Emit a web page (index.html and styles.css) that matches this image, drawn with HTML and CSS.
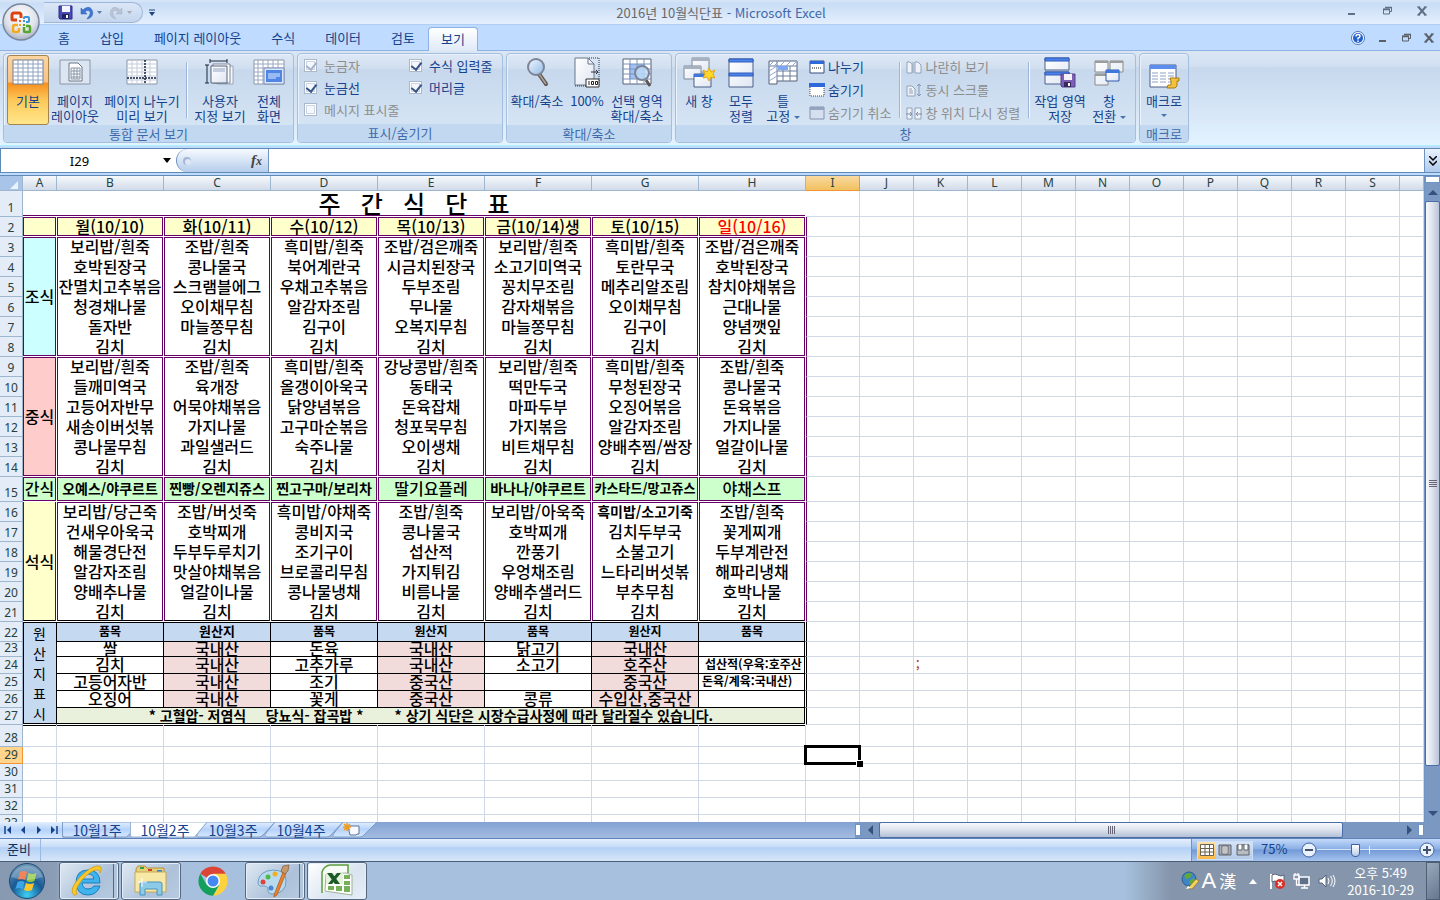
FILE: index.html
```html
<!DOCTYPE html>
<html lang="ko">
<head>
<meta charset="utf-8">
<title>2016년 10월식단표 - Microsoft Excel</title>
<link rel="stylesheet" href="styles.css">
</head>
<body>
<svg class="defs" aria-hidden="true">
  <defs>
    <linearGradient id="paper" x1="0" y1="0" x2="1" y2="1"><stop offset="0" stop-color="#fff"/><stop offset="1" stop-color="#dfe6f2"/></linearGradient>
    <radialGradient id="orb" cx=".5" cy=".35" r=".7"><stop offset="0" stop-color="#fff"/><stop offset=".6" stop-color="#dfe3ea"/><stop offset="1" stop-color="#9aa5b8"/></radialGradient>
    <radialGradient id="start" cx=".5" cy=".9" r=".9"><stop offset="0" stop-color="#3fd0f5"/><stop offset=".5" stop-color="#175a95"/><stop offset="1" stop-color="#6f97b8"/></radialGradient>
    <linearGradient id="tabfill" x1="0" y1="0" x2="0" y2="1"><stop offset="0" stop-color="#e3effd"/><stop offset=".5" stop-color="#b5d2fa"/><stop offset="1" stop-color="#d8e9ff"/></linearGradient>
    <linearGradient id="glass" x1="0" y1="0" x2="1" y2="1"><stop offset="0" stop-color="#f2f8ff"/><stop offset="1" stop-color="#8fb9e8"/></linearGradient>
  </defs>
</svg>

<header class="titlebar">
  <div class="quick">
    <button aria-label="저장"><svg width="16" height="16"><path d="M1 1h13v13H2l-1-1z" fill="#4a4bb5" stroke="#2c2c86"/><path d="M4 1h8v6H4z" fill="#f4f6fd"/><path d="M4 9h7v5H4z" fill="#222263"/><path d="M8 10h2v3H8z" fill="#fff"/></svg></button>
    <button aria-label="실행 취소"><svg width="22" height="16"><path d="M1 3v6h6L5 7c3-3 6-1 5 2-.5 2-2 3-3 5 5-1 7-5 5-9-2-4-6-3-9 0z" fill="#3f78d4" stroke="#2c5bb0" stroke-width=".5"/><path d="M17 6h5l-2.500 3z" fill="#5b7fb5"/></svg></button>
    <button aria-label="다시 실행"><svg width="26" height="16"><path d="M14 3v6H8l2-2C7 4 4 6 5 9c.5 2 2 3 3 5-5-1-7-5-5-9 2-4 6-3 9 0z" fill="#b9c4d6" stroke="#a3b0c6" stroke-width=".5"/><path d="M19 6h5l-2.500 3z" fill="#a9a9b0"/></svg></button>
  </div>
  <button class="quick-more" aria-label="빠른 실행 도구 모음 사용자 지정"><svg width="8" height="8"><path d="M1 1h6" stroke="#1f4380"/><path d="M1 3h6L4 7z" fill="#1f4380"/></svg></button>
  <h1 class="caption"><span>2016년 10월식단표</span> - Microsoft Excel</h1>
  <div class="winbtns">
    <button aria-label="최소화"><svg width="10" height="10"><path d="M1 8h7" stroke="#5f6f86" stroke-width="2"/></svg></button>
    <button aria-label="이전 크기로"><svg width="10" height="10"><path d="M3.500 2V1.500h6v4H8M1 3h6.500v5h-6V3" fill="none" stroke="#5f6f86"/><path d="M1 3.500h7M3 1.500h7" stroke="#5f6f86" stroke-width="1.500"/></svg></button>
    <button aria-label="닫기"><svg width="10" height="10"><path d="M1.500 1l7 8M8.500 1l-7 8" stroke="#5f6f86" stroke-width="2"/><path d="M0 1h3M7 1h3M0 9h3M7 9h3" stroke="#5f6f86"/></svg></button>
  </div>
</header>
<button class="office" aria-label="Office 단추"><svg width="40" height="40" viewBox="0 0 40 40">
  <circle cx="20" cy="20" r="18" fill="url(#orb)" stroke="#77869e" stroke-width="1.500"/>
  <g fill="none" stroke-linejoin="round"><path d="M16 18h-4q-1 0-1-1v-4q0-2 2-2h5q2 0 2 2v3" stroke="#dc4512" stroke-width="3"/><path d="M23 17v-1q0-1 1-1h3q1 0 1 1v3q0 1-1 1h-2" stroke="#3b95d8" stroke-width="2"/><path d="M17 23h-3q-2 0-2 2v3q0 2 2 2h2q2 0 2-2v-2" stroke="#f6a91b" stroke-width="2.500"/><path d="M23 25v4q0 1 1 1h4q1 0 1-1v-4q0-1-1-1h-3" stroke="#58a52c" stroke-width="2.500"/></g>
  <path d="M18 18h2v2h-2z" fill="#e8641b"/><path d="M22 18h2v2h-2z" fill="#3b95d8"/><path d="M18 22h2v2h-2z" fill="#f6a91b"/><path d="M22 22h2v2h-2z" fill="#58a52c"/>
</svg></button>

<nav class="tabs">
  <button>홈</button><button>삽입</button><button>페이지 레이아웃</button><button>수식</button><button>데이터</button><button>검토</button><button class="on">보기</button>
  <div class="docbtns">
    <button aria-label="도움말"><svg width="14" height="14"><circle cx="7" cy="7" r="6.500" fill="#fff" stroke="#4a74b8"/><circle cx="7" cy="7" r="5" fill="#2260cc"/><path d="M5 5.500q0-2 2-2t2 1.700Q9 6.500 7 7.300V8.500M7 9.500v1.500" stroke="#fff" stroke-width="1.500" fill="none"/></svg></button>
    <button aria-label="창 최소화"><svg width="10" height="10"><path d="M1 8h7" stroke="#5a5f68" stroke-width="2"/></svg></button>
    <button aria-label="창 복원"><svg width="10" height="10"><path d="M3.500 2V1.500h6v4H8M1 3h6.500v5h-6V3" fill="none" stroke="#5a5f68"/><path d="M1 3.500h7M3 1.500h7" stroke="#5a5f68" stroke-width="1.500"/></svg></button>
    <button aria-label="창 닫기"><svg width="10" height="10"><path d="M1.500 1l7 8M8.500 1l-7 8" stroke="#5a5f68" stroke-width="2"/><path d="M0 1h3M7 1h3M0 9h3M7 9h3" stroke="#5a5f68"/></svg></button>
  </div>
</nav>

<section class="ribbon">
  <fieldset class="group views">
    <div class="items">
      <button class="big on"><svg width="32" height="30"><path d="M1 3h30v24H1z" fill="#fff" stroke="#6f7f97"/><path d="M1 7h30M1 11h30M1 15h30M1 19h30M1 23h30M6 3v24M11 3v24M16 3v24M21 3v24M26 3v24" stroke="#8fa2bf"/></svg>기본</button>
      <button class="big w52"><svg width="32" height="30"><path d="M1 3h30v24H1z" fill="#dce6f3" stroke="#8b95a6"/><path d="M10 6h9l4 4v14H10z" fill="#fff" stroke="#6b7687"/><path d="M12 11h9v11h-9zM12 14h9M12 17h9M12 20h9M15 11v11M18 11v11" fill="none" stroke="#8794a8"/></svg>페이지<br>레이아웃</button>
      <button class="big w82"><svg width="32" height="30"><path d="M1 3h30v24H1z" fill="#fff" stroke="#8b95a6"/><path d="M1 7h30M1 11h30M1 15h30M1 19h30M1 23h30M6 3v24M11 3v24M16 3v24M24 3v24" stroke="#c3cddd"/><path d="M19 3v24M1 21h30" stroke="#111e3c" stroke-width="1.500" stroke-dasharray="2 1"/></svg>페이지 나누기<br>미리 보기</button>
      <span class="sep"></span>
      <button class="big w58"><svg width="32" height="30"><path d="M13 9h16v18H13z" fill="#f5f7fb" stroke="#9aa5b8"/><path d="M9 7h17v19H9z" fill="#fff" stroke="#7a879c"/><path d="M7 9h16v17H7z" fill="url(#paper)" stroke="#566278"/><path d="M9 11h12v4H9z" fill="#c3cddf"/><path d="M6 4h17M6 2v4M23 2v4M3 8v18M1 8h4M1 26h4" stroke="#1b2638"/></svg>사용자<br>지정 보기</button>
      <button class="big w40"><svg width="32" height="30"><path d="M1 3h30v24H1z" fill="#fff" stroke="#8b95a6"/><path d="M1 7h30M1 11h30M1 15h30M1 19h30M1 23h30M5 3v24M10 3v24M15 3v24M20 3v24M25 3v24" stroke="#9aa9c0"/><path d="M11 11h20v16H11z" fill="#dbe7fb" stroke="#7d90b8"/><path d="M13 13h16v12H13z" fill="#4f86e6"/><path d="M15 17h12M15 19h12M15 21h8" stroke="#e3eeff"/></svg>전체<br>화면</button>
    </div>
    <legend>통합 문서 보기</legend>
  </fieldset>
  <fieldset class="group show">
    <div class="items checks">
      <label class="off"><input type="checkbox" checked disabled>눈금자</label>
      <label><input type="checkbox" checked>수식 입력줄</label>
      <label><input type="checkbox" checked>눈금선</label>
      <label><input type="checkbox" checked>머리글</label>
      <label class="off"><input type="checkbox" disabled>메시지 표시줄</label>
    </div>
    <legend>표시/숨기기</legend>
  </fieldset>
  <fieldset class="group zoom">
    <div class="items">
      <button class="big w54"><svg width="32" height="30"><path d="M18 17l7 10" stroke="#5f5450" stroke-width="4" stroke-linecap="round"/><path d="M18 17l7 10" stroke="#b0a49c" stroke-width="1.500"/><circle cx="15" cy="10" r="8" fill="url(#glass)" stroke="#7d8594" stroke-width="2"/></svg>확대/축소</button>
      <button class="big w46"><svg width="32" height="30"><path d="M4 1h13l6 6v21H4z" fill="url(#paper)" stroke="#6b7687"/><path d="M17 1v6h6" fill="none" stroke="#6b7687"/><path d="M18 1h10v27M4 29h12" fill="none" stroke="#27344f" stroke-dasharray="1 1"/><path d="M20 15h7M25 13l2 2-2 2" fill="none" stroke="#333"/><path d="M15 22h13v8H15z" fill="#fff" stroke="#333"/><path d="M18 24v4M20.500 24.500h2v3h-2zM24.500 24.500h2v3h-2z" fill="none" stroke="#222"/></svg>100%</button>
      <button class="big w54"><svg width="32" height="30"><path d="M2 2h28v25H2z" fill="#fff" stroke="#566278"/><path d="M8 7h16v15H8z" fill="#9fc0f5"/><path d="M2 7h28M2 12h28M2 17h28M2 22h28M9 2v25M16 2v25M23 2v25" stroke="#7992bd"/><path d="M25 23l4 6" stroke="#5f5450" stroke-width="3"/><circle cx="21" cy="16" r="7" fill="#bcd9f7" fill-opacity=".85" stroke="#7d8594" stroke-width="2"/></svg>선택 영역<br>확대/축소</button>
    </div>
    <legend>확대/축소</legend>
  </fieldset>
  <fieldset class="group window">
    <div class="items">
      <button class="big w40"><svg width="32" height="32"><path d="M9 1h17v14H9z" fill="url(#paper)" stroke="#7a869a"/><path d="M9 1h17v3H9z" fill="#a8b1c0"/><path d="M1 9h17v13H1z" fill="url(#paper)" stroke="#7a869a"/><path d="M1 9h17v3H1z" fill="#a8b1c0"/><path d="M11 17h17v13H11z" fill="url(#paper)" stroke="#4a5f88"/><path d="M11 17h17v3H11z" fill="#3f77dd"/><path d="M26 11l2 4 4-2-2 4 2 4-4-1-2 4-2-4-4 1 2-4-2-4 4 2z" fill="#ffd829" stroke="#e3a513"/></svg>새 창</button>
      <button class="big w44"><svg width="32" height="32"><path d="M4 2h24v28H4z" fill="url(#paper)" stroke="#4a5f88"/><path d="M4 2h24v3H4zM4 16h24v3H4z" fill="#4c83ea" stroke="#2c5bb8"/></svg>모두<br>정렬</button>
      <button class="big w40"><svg width="32" height="30"><path d="M2 4h28v20H10v3H2z" fill="#fff" stroke="#566278"/><path d="M2 9h28M10 4v20M10 14h20M10 19h20M16 9v15M23 9v15" stroke="#6b7c9b"/><path d="M2 9l5-5M7 9l5-5M13 9l5-5M19 9l5-5M25 9l5-5M2 14l8-5M2 19l8-5M2 24l8-5" stroke="#8fa8d8"/><path d="M11 9h10v4H11z" fill="#7ea6f2"/></svg>틀<br><span>고정 <i class="dd"></i></span></button>
      <div class="smalls first">
        <button><svg width="16" height="14"><path d="M1 1h14v12H1z" fill="#fff" stroke="#33507f"/><path d="M1 1h14v3H1z" fill="#2f68d8"/><path d="M3 8h10" stroke="#111" stroke-dasharray="1 1"/></svg>나누기</button>
        <button><svg width="16" height="14"><path d="M1 1h14v12H1z" fill="#fff" stroke="#444" stroke-dasharray="1 1"/><path d="M0 0h16v4H0z" fill="#2f68d8"/></svg>숨기기</button>
        <button disabled><svg width="16" height="14"><path d="M1 1h14v12H1z" fill="#d5dfef" stroke="#8392ad"/><path d="M1 1h14v3H1z" fill="#93a3c0"/></svg>숨기기 취소</button>
      </div>
      <span class="sep"></span>
      <div class="smalls">
        <button disabled><svg width="16" height="14"><path d="M1 2h3l2 2v9H1zM9 2h3l3 3v8H9z" fill="#eef3fa" stroke="#93a1b8"/><path d="M7 2v11" stroke="#93a1b8"/></svg>나란히 보기</button>
        <button disabled><svg width="16" height="14"><path d="M1 3h5l3 3v7H1z" fill="#eef3fa" stroke="#93a1b8"/><path d="M3 6h3M3 8h4M3 10h4" stroke="#93a1b8"/><path d="M13 1v12M11 3l2-2 2 2M11 11l2 2 2-2" fill="none" stroke="#8796b0"/></svg>동시 스크롤</button>
        <button disabled><svg width="16" height="14"><path d="M1 2h5v11H1zM9 2h6v11H9z" fill="#eef3fa" stroke="#93a1b8"/><path d="M0 8h6M4 6l2 2-2 2M16 8h-6M12 6l-2 2 2 2" fill="none" stroke="#7f8ea8"/></svg>창 위치 다시 정렬</button>
      </div>
      <span class="sep"></span>
      <button class="big w54"><svg width="32" height="32"><path d="M1 1h24v12H1zM1 15h24v12H1z" fill="url(#paper)" stroke="#4a5f88"/><path d="M1 1h24v3H1zM1 15h24v3H1z" fill="#4c83ea" stroke="#2c5bb8"/><path d="M17 17h14v13H18l-1-1z" fill="#7d5fb8" stroke="#55408a"/><path d="M20 17h8v6h-8z" fill="#f4f1fb"/><path d="M20 25h7v5h-7z" fill="#38285f"/><path d="M24 26h2v3h-2z" fill="#fff"/></svg>작업 영역<br>저장</button>
      <button class="big w44"><svg width="32" height="32"><path d="M2 4h13v11H2zM17 4h13v11H17zM2 17h13v11H2z" fill="url(#paper)" stroke="#8a8a8a"/><path d="M2 4h13v2H2zM17 4h13v2H17zM2 17h13v2H2z" fill="#9c9c9c"/><path d="M13 13h13v11H13z" fill="url(#paper)" stroke="#2f5aa8"/><path d="M13 13h13v3H13z" fill="#3f77dd"/></svg>창<br><span>전환 <i class="dd"></i></span></button>
    </div>
    <legend>창</legend>
  </fieldset>
  <fieldset class="group macro">
    <div class="items">
      <button class="big w46"><svg width="32" height="32"><path d="M2 8h26v22H2z" fill="#fff" stroke="#4a5f88"/><path d="M2 8h26v4H2z" fill="#5b8dee"/><path d="M4 16h22M4 19h22M4 22h22M4 25h22" stroke="#8fa3c8" stroke-dasharray="6 2"/><path d="M22 21h9v3h-2v5l-2 2h-8l1-3h3v-4z" fill="#f3c23c" stroke="#a87b16"/></svg>매크로<i class="dd below"></i></button>
    </div>
    <legend>매크로</legend>
  </fieldset>
</section>

<section class="formula">
  <input class="name" aria-label="이름 상자" value="I29">
  <button class="namedd" aria-label="이름 목록"><svg width="8" height="5"><path d="M0 0h8L4 5z" fill="#000"/></svg></button>
  <button class="fx" aria-label="함수 삽입"><svg width="10" height="10"><circle cx="5" cy="5" r="4" fill="#a5b6d2"/><circle cx="6" cy="6" r="3" fill="#dde7f5"/></svg><span>f<small>x</small></span></button>
  <input class="entry" aria-label="수식 입력줄">
  <button class="expand" aria-label="수식 입력줄 확장"><svg width="8" height="10"><path d="M0 0l4 4 4-4M0 5l4 4 4-4" fill="none" stroke="#000" stroke-width="1.500"/></svg></button>
</section>

<main class="book">
  <div class="sheet"><table id="grid"></table></div>
  <div class="vscroll">
    <span class="split"></span>
    <button aria-label="위로"><svg width="10" height="5"><path d="M0 5h10L5 0z" fill="#33507f"/></svg></button>
    <div class="thumb"><i></i></div>
    <div class="rest"></div>
    <button aria-label="아래로"><svg width="10" height="5"><path d="M0 0h10L5 5z" fill="#33507f"/></svg></button>
  </div>
</main>

<section class="bottom">
  <div class="tabnav">
    <button aria-label="첫 시트"><svg width="8" height="8"><path d="M1 0v8" stroke="#15428b" stroke-width="1.500"/><path d="M7 0v8L3 4z" fill="#15428b"/></svg></button>
    <button aria-label="이전 시트"><svg width="8" height="8"><path d="M6 0v8L2 4z" fill="#15428b"/></svg></button>
    <button aria-label="다음 시트"><svg width="8" height="8"><path d="M2 0v8l4-4z" fill="#15428b"/></svg></button>
    <button aria-label="마지막 시트"><svg width="8" height="8"><path d="M7 0v8" stroke="#15428b" stroke-width="1.500"/><path d="M1 0v8l4-4z" fill="#15428b"/></svg></button>
  </div>
  <div class="sheettabs">
    <button><svg width="80" height="16"><path d="M.5 0v13q0 2 2 2h62l4-4V0z" fill="url(#tabfill)" stroke="#7d9cc9"/></svg>10월1주</button>
    <button class="on"><svg width="80" height="16"><path d="M.5 0v13q0 2 2 2h62L77 0z" fill="#fff" stroke="#9ab4d8"/></svg>10월2주</button>
    <button><svg width="80" height="16"><path d="M9 0h68L65 13q-2 2-4 2H0q-2 0 0-4z" fill="url(#tabfill)" stroke="#7d9cc9"/></svg>10월3주</button>
    <button><svg width="80" height="16"><path d="M9 0h68L65 13q-2 2-4 2H0q-2 0 0-4z" fill="url(#tabfill)" stroke="#7d9cc9"/></svg>10월4주</button>
    <button class="new" aria-label="워크시트 삽입"><svg width="44" height="16"><path d="M9 0h34L30 13q-2 2-4 2H0q-2 0 0-4z" fill="url(#tabfill)" stroke="#7d9cc9"/><path d="M14 4h11v8h-2l-1 1h-6z" fill="#f6f9fd" stroke="#5f7596"/><path d="M13 1v8M9 5h8M10 2l6 6M16 2l-6 6" stroke="#f09a20" stroke-width="1.500"/></svg></button>
  </div>
  <div class="hscroll">
    <span class="split"></span>
    <button aria-label="왼쪽으로"><svg width="5" height="10"><path d="M5 0v10L0 5z" fill="#33507f"/></svg></button>
    <div class="thumb"><i></i></div>
    <div class="rest"></div>
    <button aria-label="오른쪽으로"><svg width="5" height="10"><path d="M0 0v10l5-5z" fill="#33507f"/></svg></button>
    <span class="split"></span>
  </div>
</section>

<footer class="status">
  <span class="ready">준비</span>
  <div class="statusright">
    <div class="viewbtns">
      <button class="on" aria-label="기본"><svg width="14" height="12"><path d="M.5.5h13v11H.5z" fill="#fff" stroke="#6c6250"/><path d="M0 4.500h14M0 8h14M5 0v12M9.500 0v12" stroke="#6c6250"/></svg></button>
      <button aria-label="페이지 레이아웃"><svg width="14" height="12"><path d="M1 1h12v10H1z" fill="#a9adb5" stroke="#5d626c"/><path d="M4 2h6v8H4z" fill="#fff" stroke="#5d626c"/><path d="M5 4h4M5 6h4M5 8h4" stroke="#888"/></svg></button>
      <button aria-label="페이지 나누기 미리 보기"><svg width="14" height="12"><path d="M1 1h12v10H1z" fill="#b9bcc3" stroke="#5d626c"/><path d="M2 0h4v6H2zM8 0h4v6H8z" fill="#fff" stroke="#5d626c"/></svg></button>
    </div>
    <span class="pct">75%</span>
    <button class="round" aria-label="축소"><svg width="16" height="16"><circle cx="8" cy="8" r="7" fill="#e9f1fc" stroke="#3f62a0"/><path d="M4 8h8" stroke="#44546f" stroke-width="2"/></svg></button>
    <input type="range" min="0" max="100" value="37" aria-label="확대/축소">
    <button class="round" aria-label="확대"><svg width="16" height="16"><circle cx="8" cy="8" r="7" fill="#e9f1fc" stroke="#3f62a0"/><path d="M4 8h8M8 4v8" stroke="#44546f" stroke-width="2"/></svg></button>
  </div>
</footer>

<footer class="taskbar">
  <button class="startbtn" aria-label="시작"><svg width="38" height="38" viewBox="0 0 38 38"><circle cx="19" cy="19" r="17.500" fill="url(#start)" stroke="#1f4a75"/><path d="M12 10q4-2 7 0l-2 8q-3-2-7 0z" fill="#ee5b22"/><path d="M20.500 11q4 2 8 0l-2 8q-4 2-8 0z" fill="#8fc63c"/><path d="M9.500 20q4-2 7 0l-2 7q-3-2-7 0z" fill="#3fa4e8"/><path d="M18 21q4 2 8 0l-2 7q-4 2-8 0z" fill="#fcc52d"/><path d="M3 15a17 17 0 0 1 32 0q-16 6-32 0z" fill="#fff" fill-opacity=".25"/></svg></button>
  <button class="task framed stack" aria-label="Internet Explorer"><svg width="34" height="34" viewBox="0 0 34 34"><path d="M30 19H12q1 6 6 6 4 0 6-3h6q-3 9-12 9-11 0-12-12Q6 6 18 6q12 0 12 13zM12 15h12q-1-5-6-5t-6 5z" fill="#3fb4ec" stroke="#1c7dc0"/><path d="M4 31Q-2 26 10 13 22 1 29 2q4 1 1 7 0-4-4-3-6 1-14 10Q4 26 7 30q-2 2-3 1z" fill="#f8c928" stroke="#c9960f" stroke-width=".7"/></svg></button>
  <button class="task framed" aria-label="파일 탐색기"><svg width="36" height="34" viewBox="0 0 36 34"><path d="M3 5l2-3h7l2 2h17v5H3z" fill="#e8cf7a" stroke="#b4923a"/><path d="M7 3h4v2H7z" fill="#2ca046"/><path d="M15 5h4v2h-4z" fill="#d04026"/><path d="M24 6h5v2h-5z" fill="#2b8ae0"/><path d="M2 8h31v20H2z" fill="#f8e8a5" stroke="#c7a854"/><path d="M7 31V20q0-2 2-2h18q2 0 2 2v11h-5v-6H12v6z" fill="#8ccbe8" stroke="#4a92bb"/><path d="M9 14v9M5 18h9" stroke="#fff"/></svg></button>
  <button class="task" aria-label="Chrome"><svg width="32" height="32" viewBox="0 0 32 32"><path d="M16 16L3.300 8.700A14.700 14.700 0 0 1 28.700 8.700z" fill="#db4437"/><path d="M16 8.700h12.700A14.700 14.700 0 0 1 16 30.700l6.300-11z" fill="#fdd23e"/><path d="M3.300 8.700A14.700 14.700 0 0 0 16 30.700l6.300-11H9.700z" fill="#12a05c"/><circle cx="16" cy="16" r="7" fill="#fff"/><circle cx="16" cy="16" r="5.500" fill="#4688f1"/></svg></button>
  <button class="task framed stack" aria-label="그림판"><svg width="34" height="34" viewBox="0 0 34 34"><path d="M17 6q13 0 13 11 0 12-13 13-6 0-5-5 0-3-5-3-5 1-5-4Q3 7 17 6z" fill="#b8daf0" stroke="#6a9dc2"/><circle cx="7" cy="18" r="2.500" fill="#e0413a"/><circle cx="12" cy="13" r="2.500" fill="#51b748"/><circle cx="19" cy="10" r="2.500" fill="#f2b01f"/><circle cx="15" cy="24" r="2.500" fill="#4b86d6"/><path d="M18 31l9-23 3 1-9 22-3 2z" fill="#e8822c" stroke="#a9561a" stroke-width=".7"/><path d="M25 7l2-5 6-1-1 6-3 3z" fill="#c79a6c" stroke="#83583a" stroke-width=".7"/></svg></button>
  <button class="task framed current" aria-label="Excel"><svg width="34" height="34" viewBox="0 0 34 34"><path d="M2 29V8q2-6 8-7h18v8" fill="#f7fbf5" stroke="#5c9e3f" stroke-width="1.500"/><path d="M5 27l1-17 20-1 6 2v20z" fill="#fff" stroke="#9db396"/><path d="M8 22h6v4H8zM16 22h6v5h-6zM24 22h6v6h-6zM24 11h6v4h-6zM24 17h6v4h-6z" fill="#76b15a"/><path d="M6 9h17v11H6z" fill="#e5f3dc"/><path d="M7 9h5l8 11h-5zM17 9h4L12 20H8z" fill="#1c5a27"/></svg></button>
  <div class="tray">
    <svg width="20" height="20"><circle cx="8" cy="8" r="7" fill="#3c86c8" stroke="#2b5d90"/><path d="M3 5q4-5 8-2l-2 4-4 1zM8 10l5-3 1 3-4 4z" fill="#61a83c"/><path d="M7 17l8-9 3 2-7 8z" fill="#f7d35c" stroke="#8f6a20" stroke-width=".7"/><path d="M5 18l2-3 3 2z" fill="#fff"/></svg>
    <span class="ime">A</span><span class="han">漢</span>
    <button aria-label="숨겨진 아이콘 표시"><svg width="8" height="5"><path d="M0 5h8L4 0z" fill="#fff"/></svg></button>
    <svg width="18" height="18"><path d="M3 2v15" stroke="#fff" stroke-width="2"/><path d="M4 3q3-2 6 0t6 0v7q-3 2-6 0t-6 0z" fill="#fff" stroke="#56657a"/><circle cx="12" cy="12" r="5" fill="#d92f25"/><path d="M10 10l4 4M14 10l-4 4" stroke="#fff" stroke-width="1.500"/></svg>
    <svg width="18" height="18"><path d="M6 5h10v8H6z" fill="#5f7188" stroke="#fff" stroke-width="1.500"/><path d="M8 16h7M11.500 13v3" stroke="#fff" stroke-width="1.500"/><path d="M1 3h5v4H1zM2 1v2M5 1v2M3.500 7v6h3" fill="none" stroke="#fff" stroke-width="1.300"/></svg>
    <svg width="18" height="18"><path d="M1 7h3l4-4v12l-4-4H1z" fill="#fff" stroke="#56657a"/><path d="M10 6q2 3 0 6M12.500 4q3.500 5 0 10M15 3q4 6 0 12" fill="none" stroke="#fff"/></svg>
    <time class="clock">오후 5:49<br>2016-10-29</time>
  </div>
  <button class="peek" aria-label="바탕 화면 보기"></button>
</footer>
<script src="grid.js"></script>
</body>
</html>
```

FILE: styles.css
```css
* { box-sizing: border-box; }
html, body { height: 100%; margin: 0; }
body {
  display: flex; flex-direction: column; overflow: hidden; position: relative;
  background: #bfdbff; color: #15428b;
  font: 13px/15px "Noto Sans CJK KR", "Noto Sans", sans-serif;
}
button { border: 0; padding: 0; margin: 0; background: none; color: inherit; font: inherit; display: flex; align-items: center; justify-content: center; }
input { border: 0; margin: 0; padding: 0; font: inherit; }
svg { display: block; flex: none; }
.defs { position: absolute; width: 0; height: 0; }

/* title bar */
.titlebar { height: 25px; flex: none; display: flex; align-items: center; background: linear-gradient(#d8e6f8, #c9ddf6 15%, #e4effd 95%, #b0cdf2 97%); }
.quick { margin-left: 44px; height: 21px; width: 99px; padding-left: 14px; display: flex; align-items: center; gap: 6px; border: 1px solid #9db6d9; border-left: 0; border-radius: 0 11px 11px 0; background: linear-gradient(#dbe7f7, #c4d6ee); }
.quick-more { margin-left: 5px; width: 8px; }
.caption { flex: 1; margin: 0 36px 0 -25px; text-align: center; font-size: 13px; font-weight: 400; color: #3e6aaa; white-space: nowrap; }
.caption span { color: #696969; }
.winbtns { display: flex; gap: 25px; margin-right: 13px; padding-bottom: 4px; }
.office { position: absolute; left: 1px; top: 2px; border-radius: 50%; }

/* ribbon tabs */
.tabs { height: 26px; flex: none; display: flex; padding-left: 43px; border-bottom: 1px solid #8db2e3; }
.tabs > button { padding: 0 15px; }
.tabs > button.on { margin: 2px 0 -1px -2px; padding: 0 12px 2px; border: 1px solid #8db2e3; border-bottom: 0; border-radius: 4px 4px 0 0; background: linear-gradient(#fff, #dfeaf7); }
.docbtns { margin-left: auto; display: flex; gap: 13px; padding-right: 6px; align-items: center; }

/* ribbon */
.ribbon { height: 95px; flex: none; display: flex; gap: 3px; padding: 2px 3px; border-bottom: 1px solid #aef0ff; background: linear-gradient(#dbe6f4, #d2e0f2 16%, #c7d8ed 18%, #d8e8f8 70%, #e3f4ff); }
.group { margin: 0; min-width: 0; padding: 0; border: 1px solid #a4bedd; border-radius: 4px; display: flex; flex-direction: column; overflow: hidden; background: linear-gradient(#dee8f5, #d1dff0 16%, #c7d8ed 18%, #d9e8f6); box-shadow: inset 1px 1px 0 #eaf2fb; }
.group legend { order: 2; float: left; width: 100%; height: 18px; padding: 0; text-align: center; line-height: 17px; color: #3e6aaa; background: #c1d8f0; }
.items { display: flex; height: 71px; padding-left: 3px; order: 1; }
.views { width: 291px; }
.show { width: 206px; }
.zoom { width: 166px; }
.window { width: 461px; }
.macro { width: 50px; }
.macro .items { padding-left: 1px; }
.big { width: 42px; height: 70px; margin-top: 1px; padding-top: 2px; flex: none; flex-direction: column; justify-content: flex-start; white-space: nowrap; text-align: center; }
.big svg { height: 36px; }
.big.on { border: 1px solid #a5844f; border-radius: 3px; padding-top: 1px; background: linear-gradient(#fbd5a0, #f9c287 38%, #f78f1f 40%, #fcc95a 65%, #ffe68b); }
.w40 { width: 40px; } .w44 { width: 44px; } .w46 { width: 46px; } .w52 { width: 52px; } .w54 { width: 54px; } .w58 { width: 58px; } .w82 { width: 82px; }
.sep { width: 2px; height: 56px; margin: 8px 3px 0; flex: none; background: linear-gradient(90deg, #9ab5d9 50%, #f2f8ff 50%); }
.dd { display: inline-block; border: 3px solid transparent; border-top-color: #4a72b0; border-bottom: 0; vertical-align: middle; }
.below { margin-top: 6px; }
.smalls { display: flex; flex-direction: column; gap: 8px; padding: 5px 5px 0 2px; flex: none; }
.first { margin-left: 4px; }
.smalls button { gap: 3px; justify-content: flex-start; white-space: nowrap; }
.smalls button:disabled, .off { color: #8d8d8d; }
.checks { display: grid; grid-template-columns: 105px 90px; grid-auto-rows: 22px; padding: 0 0 0 6px; align-items: center; }
.checks label { display: flex; align-items: center; gap: 7px; white-space: nowrap; }
.checks input { appearance: none; width: 13px; height: 13px; border: 1px solid #abb9cd; background: #f4f7fb; box-shadow: inset 0 0 0 1px #fff, inset 0 0 0 2px #ccd6e4; position: relative; }
.checks input:checked::after { content: ""; position: absolute; left: 3px; top: 0; width: 5px; height: 8px; border: solid #35548a; border-width: 0 2px 2px 0; transform: rotate(38deg); }
.checks input:disabled:checked::after { border-color: #a5b4ca; }

/* formula bar */
.formula { height: 25px; flex: none; margin-top: 2px; display: flex; background: #fff; border: solid #5f8ab5; border-width: 1px 0 1px 1px; }
.name { width: 157px; text-align: center; font: 13px/22px "Noto Sans", sans-serif; color: #000; background: #fff; }
.namedd { width: 18px; }
.fx { width: 93px; justify-content: space-between; padding: 0 6px 0 5px; border: 1px solid #6f93c2; border-width: 0 1px; border-radius: 12px 0 0 12px; background: linear-gradient(#f6faff, #b6cdec); }
.fx span { font: italic bold 15px/18px "Liberation Serif", serif; color: #444; }
.fx small { font-size: 12px; }
.entry { flex: 1; min-width: 0; background: #fff; }
.expand { width: 16px; border-left: 1px solid #6f93c2; background: linear-gradient(#eaf3ff, #b0caec); }

/* worksheet */
.book { flex: 1; min-height: 0; margin-top: 2px; display: flex; border-top: 1px solid #5f8ab5; }
.sheet { flex: 1; min-width: 0; overflow: hidden; background: #fff; }
#grid { width: 100%; table-layout: fixed; border-spacing: 0; color: #000; }
#grid td, #grid th { padding: 0; white-space: nowrap; border: solid #d0d7e5; border-width: 0 1px 1px 0; }
#grid td { padding-bottom: 2px; font-size: 16px; line-height: 12px; font-weight: 500; text-align: center; vertical-align: middle; }
#grid th { font: 12px/12px "Noto Sans", sans-serif; color: #27413e; border-color: #9eb6ce; background: #e4ecf7; }
#grid thead th { background: linear-gradient(#f6f9fc, #d3dbe9); }
#grid thead th:first-child { background: #a9c4e9; }
#grid thead th.sel { background: linear-gradient(#f9d99f, #f1c15f); border-color: #f29536; }
#grid tbody th { vertical-align: bottom; padding-bottom: 2px; }
#grid tbody th.sel { background: #ffd58d; border-color: #f29536; }
.all i { display: block; margin: 4px 4px 0 auto; width: 0; border: 4px solid transparent; border-right-color: #eaf2fc; border-bottom-color: #eaf2fc; }
#grid .title { font-size: 24px; line-height: 23px; white-space: pre; border-color: #fff; box-shadow: inset 0 -1px #606; }
#grid .menu { border-color: #fff; border-bottom-width: 0; box-shadow: inset 1px 0 #606, inset -1px 0 #606; }
#grid .menu.top { box-shadow: inset 1px 0 #606, inset -1px 0 #606, inset 0 1px #606; }
#grid .menu.bot { border-bottom-width: 1px; box-shadow: inset 1px 0 #606, inset -1px 0 #606, inset 0 -1px #606; }
#grid .menu.end { border-bottom-width: 1px; box-shadow: inset 1px 0 #606, inset -1px 0 #606, inset 0 -1px #000; }
#grid .box { border-color: #fff; box-shadow: inset 0 0 0 1px #606; }
#grid .yellow { background: #ffc; }
#grid .cyan { background: #cff; }
#grid .pink { background: #fcc; }
#grid .green { background: #cfc; }
#grid .red { color: #f00; }
#grid .s14 { font-size: 14px; font-weight: 700; }
#grid .s13 { font-size: 13px; font-weight: 700; }
#grid .s12 { font-size: 12px; font-weight: 700; }
#grid .org { border-color: #000; }
#grid .head { background: #c5d9f1; box-shadow: inset 0 1px #000; }
#grid .org.lastcol { border-right-color: #fff; box-shadow: inset -1px 0 #000; }
#grid .head.lastcol { box-shadow: inset -1px 0 #000, inset 0 1px #000; }
#grid .rose { background: #f2dcdb; }
#grid .origin { background: #c5d9f1; font-size: 14px; font-weight: 400; line-height: 20px; padding-bottom: 0; border-color: #000; border-bottom-color: #fff; box-shadow: inset 1px 0 #000, inset 0 1px #000, inset 0 -1px #000; }
#grid .note { background: #e9f1dd; white-space: pre; border-color: #fff; box-shadow: inset -1px -1px #000; }
#grid .edge { border-left: 1px solid #606; }
#grid .edgeb { border-left: 1px solid #000; }
#grid .under { box-shadow: inset 0 1px #000; }
#grid .left { text-align: left; padding-left: 3px; }
#grid .indent { padding-left: 6px; }
#grid .semi { text-align: left; padding-left: 2px; font-size: 12px; color: #b33c1e; }
#grid .active { position: relative; }
.active::before { content: ""; position: absolute; inset: -2px; border: 3px solid #000; }
.active::after { content: ""; position: absolute; right: -4px; bottom: -4px; width: 6px; height: 6px; background: #000; border: solid #fff; border-width: 1px 0 0 1px; }

/* scroll bars */
.vscroll { width: 16px; flex: none; display: flex; flex-direction: column; border-left: 1px solid #6f93c2; background: #7a98c2; }
.vscroll .split { height: 7px; border: 1px solid #6f93c2; background: #fff; }
.vscroll button { height: 18px; flex: none; }
.vscroll .thumb { flex: 567; }
.vscroll .rest { flex: 38; }
.thumb { display: flex; align-items: center; justify-content: center; border: 1px solid #4a6ea5; border-radius: 2px; background: linear-gradient(90deg, #f7f9fc, #dfe5ee 45%, #b8c4d8); }
.vscroll i { width: 8px; height: 7px; background: repeating-linear-gradient(#667 0 1px, transparent 1px 2px); }
.bottom { height: 17px; flex: none; display: flex; border-bottom: 1px solid #5d83b8; background: linear-gradient(#83a3d3, #a3bbe0); }
.tabnav { width: 62px; display: flex; justify-content: space-around; background: linear-gradient(#e3effd, #b5d2fa 50%, #d8e9ff); }
.tabnav button { width: 14px; }
.sheettabs { display: flex; }
.sheettabs button { position: relative; width: 68px; padding-left: 2px; font-size: 14px; line-height: 16px; z-index: 0; }
.sheettabs svg { position: absolute; left: 0; top: 0; z-index: -1; }
.sheettabs .on { z-index: 1; }
.hscroll { width: 585px; margin-left: auto; flex: none; display: flex; padding-right: 16px; background: #7a98c2; }
.hscroll .split { width: 6px; margin: 2px 0; border: 1px solid #6f93c2; background: #fff; }
.hscroll button { width: 18px; }
.hscroll .thumb { flex: 464; background: linear-gradient(#f7f9fc, #dfe5ee 45%, #b3c0d5); }
.hscroll .rest { flex: 57; }
.hscroll i { width: 7px; height: 8px; background: repeating-linear-gradient(90deg, #667 0 1px, transparent 1px 2px); }

/* status bar */
.status { height: 22px; flex: none; display: flex; background: linear-gradient(#e4effd, #c7dcf8 35%, #b3d0f5 40%, #d7e6f9); }
.ready { width: 41px; padding: 2px 0 0 7px; border-right: 1px solid #9ab9e3; color: #15315f; }
.statusright { width: 249px; margin-left: auto; padding-left: 5px; display: flex; align-items: center; border-left: 1px solid #6f93c2; background: linear-gradient(#c3d9f9, #8bb0e6 45%, #7399d6 50%, #a5c3ee); }
.viewbtns { display: flex; border: 1px solid #cfdff5; background: linear-gradient(#d5e3f6, #b6cbe9); }
.viewbtns button { width: 18px; height: 17px; }
.viewbtns .on { background: linear-gradient(#fde3ab, #fbb945); }
.pct { width: 48px; padding-left: 8px; line-height: 18px; padding-bottom: 3px; }
.round { width: 16px; }
.status input { width: 102px; height: 16px; appearance: none; background: linear-gradient(#e5effc, #e5effc) 52px 4px / 1px 8px no-repeat, linear-gradient(#d7e5f8, #d7e5f8) 0 7px / 100% 1px no-repeat; }
.status input::-webkit-slider-thumb { appearance: none; width: 9px; height: 13px; background: linear-gradient(#fff, #b9cdec); border: 1px solid #3f62a0; border-radius: 1px 1px 5px 5px; }

/* taskbar */
.taskbar { height: 39px; flex: none; display: flex; border-top: 1px solid #4b5e78; background: linear-gradient(90deg, #8799b0, #8a9db5 55px, #a6c0dd 75px, #a6c0dd calc(100% - 315px), #8596ac calc(100% - 270px)); }
.startbtn { width: 53px; margin-right: 6px; }
.task { width: 60px; margin-right: 2px; }
.framed { border: 1px solid #56687f; border-radius: 3px; background: linear-gradient(135deg, #e0e9f3, #adc2da 60%, #b7cae0); box-shadow: inset 0 0 0 1px #e5eef8; }
.stack { padding-right: 5px; box-shadow: inset 0 0 0 1px #e5eef8, inset -4px 0 #b3c5db, inset -5px 0 #56687f; }
.current { background: linear-gradient(135deg, #fff, #d9e4f0 60%, #e8eff7); }
.tray { margin-left: auto; display: flex; align-items: center; gap: 7px; color: #fff; }
.ime { font: 22px/24px "Liberation Sans", sans-serif; margin-left: -6px; }
.han { font: 17px/24px "Noto Sans CJK KR", sans-serif; margin: 0 6px 0 -4px; }
.tray button { width: 8px; margin-right: 4px; }
.clock { margin: 0 12px 0 4px; font-size: 13px; line-height: 17px; text-align: center; }
.peek { width: 14px; border: 1px solid #4f5f74; background: linear-gradient(135deg, #9aa9bb, #66788f); }
```

FILE: grid.js
```js
const heights = [26, 20, 20, 20, 20, 20, 20, 20, 20, 20, 20, 20, 20, 20, 25, 20, 20, 20, 20, 20, 20,
  20, 15, 17, 17, 17, 17, 22, 17, 17, 17, 17, 17];

const menu = {
  2: ["월(10/10)", "화(10/11)", "수(10/12)", "목(10/13)", "금(10/14)생", "토(10/15)", "일(10/16)"],
  3: ["보리밥/흰죽", "조밥/흰죽", "흑미밥/흰죽", "조밥/검은깨죽", "보리밥/흰죽", "흑미밥/흰죽", "조밥/검은깨죽"],
  4: ["호박된장국", "콩나물국", "북어계란국", "시금치된장국", "소고기미역국", "토란무국", "호박된장국"],
  5: ["잔멸치고추볶음", "스크램블에그", "우채고추볶음", "두부조림", "꽁치무조림", "메추리알조림", "참치야채볶음"],
  6: ["청경채나물", "오이채무침", "알감자조림", "무나물", "감자채볶음", "오이채무침", "근대나물"],
  7: ["돌자반", "마늘쫑무침", "김구이", "오복지무침", "마늘쫑무침", "김구이", "양념깻잎"],
  8: ["김치", "김치", "김치", "김치", "김치", "김치", "김치"],
  9: ["보리밥/흰죽", "조밥/흰죽", "흑미밥/흰죽", "강낭콩밥/흰죽", "보리밥/흰죽", "흑미밥/흰죽", "조밥/흰죽"],
  10: ["들깨미역국", "육개장", "올갱이아욱국", "동태국", "떡만두국", "무청된장국", "콩나물국"],
  11: ["고등어자반무", "어묵야채볶음", "닭양념볶음", "돈육잡채", "마파두부", "오징어볶음", "돈육볶음"],
  12: ["새송이버섯볶", "가지나물", "고구마순볶음", "청포묵무침", "가지볶음", "알감자조림", "가지나물"],
  13: ["콩나물무침", "과일샐러드", "숙주나물", "오이생채", "비트채무침", "양배추찜/쌈장", "얼갈이나물"],
  14: ["김치", "김치", "김치", "김치", "김치", "김치", "김치"],
  15: ["오예스/야쿠르트", "찐빵/오렌지쥬스", "찐고구마/보리차", "딸기요플레", "바나나/야쿠르트", "카스타드/망고쥬스", "야채스프"],
  16: ["보리밥/당근죽", "조밥/버섯죽", "흑미밥/야채죽", "조밥/흰죽", "보리밥/아욱죽", "흑미밥/소고기죽", "조밥/흰죽"],
  17: ["건새우아욱국", "호박찌개", "콩비지국", "콩나물국", "호박찌개", "김치두부국", "꽃게찌개"],
  18: ["해물경단전", "두부두루치기", "조기구이", "섭산적", "깐풍기", "소불고기", "두부계란전"],
  19: ["알감자조림", "맛살야채볶음", "브로콜리무침", "가지튀김", "우엉채조림", "느타리버섯볶", "해파리냉채"],
  20: ["양배추나물", "얼갈이나물", "콩나물냉채", "비름나물", "양배추샐러드", "부추무침", "호박나물"],
  21: ["김치", "김치", "김치", "김치", "김치", "김치", "김치"],
  22: ["품목", "원산지", "품목", "원산지", "품목", "원산지", "품목"],
  23: ["쌀", "국내산", "돈육", "국내산", "닭고기", "국내산", ""],
  24: ["김치", "국내산", "고추가루", "국내산", "소고기", "호주산", "섭산적(우육:호주산"],
  25: ["고등어자반", "국내산", "조기", "중국산", "", "중국산", "돈육/계육:국내산)"],
  26: ["오징어", "국내산", "꽃게", "중국산", "콩류", "수입산,중국산", ""]
};

const labels = {
  2: ["", 1, "box yellow"], 3: ["조식", 6, "box cyan"], 9: ["중식", 6, "box pink"],
  15: ["간식", 1, "box green"], 16: ["석식", 6, "menu top end yellow"],
  22: ["원<br>산<br>지<br>표<br>시", 6, "origin"]
};

const sizes = { "15-0": "s14", "15-1": "s14", "15-2": "s14", "15-4": "s14", "15-5": "s13", "16-5": "s14",
  "24-6": "s12 left indent", "25-6": "s12 left", "22-1": "s13" };

const td = (cls, text = "", attrs = "") => `<td class="${cls}" ${attrs}>${text}</td>`;

function menuClass(r, c) {
  let cls;
  if (r === 2) cls = "box yellow" + (c === 6 ? " red" : "");
  else if (r === 15) cls = "box green";
  else if (r < 22) cls = "menu" + ([3, 9, 16].includes(r) ? " top" : [8, 14].includes(r) ? " bot" : r === 21 ? " end" : "");
  else cls = "org" + (r === 22 ? (sizes[`${r}-${c}`] ? " head" : " head s12") : c % 2 ? " rose" : "") + (c === 6 ? " lastcol" : "");
  return cls + " " + (sizes[`${r}-${c}`] || "");
}

function rowCells(r) {
  let html = "";
  if (r === 1) html += td("title", "주   간   식   단   표", 'colspan="8"');
  else if (r <= 27) {
    if (labels[r]) html += td(labels[r][2], labels[r][0], `rowspan="${labels[r][1]}"`);
    if (r === 27) html += td("note s14", "* 고혈압- 저염식     당뇨식- 잡곡밥 *        * 상기 식단은 시장수급사정에 따라 달라질수 있습니다.", 'colspan="7"');
    else menu[r].forEach((t, c) => { html += td(menuClass(r, c), t); });
  } else for (let c = 0; c < 8; c++) html += td(r === 28 ? "under" : "");
  for (let c = 0; c < 12; c++) {
    if (c === 0) html += td(r === 29 ? "active" : r > 1 && r < 22 ? "edge" : r > 21 && r < 28 ? "edgeb" : "");
    else html += r === 24 && c === 2 ? td("semi", ";") : td("");
  }
  return html;
}

const widths = [23, 34, ...Array(7).fill(107), ...Array(11).fill(54)];
const letters = "ABCDEFGHIJKLMNOPQRS".split("");
document.getElementById("grid").innerHTML =
  `<colgroup>${widths.map(w => `<col style="width:${w}px">`).join("")}<col></colgroup>` +
  `<thead><tr style="height:15px"><th class="all"><i></i></th>${letters.map(l => `<th class="${l === "I" ? "sel" : ""}">${l}</th>`).join("")}<th></th></tr></thead>` +
  `<tbody>${heights.map((h, i) => `<tr style="height:${h}px"><th class="${i === 28 ? "sel" : ""}">${i + 1}</th>${rowCells(i + 1)}</tr>`).join("")}</tbody>`;
```
